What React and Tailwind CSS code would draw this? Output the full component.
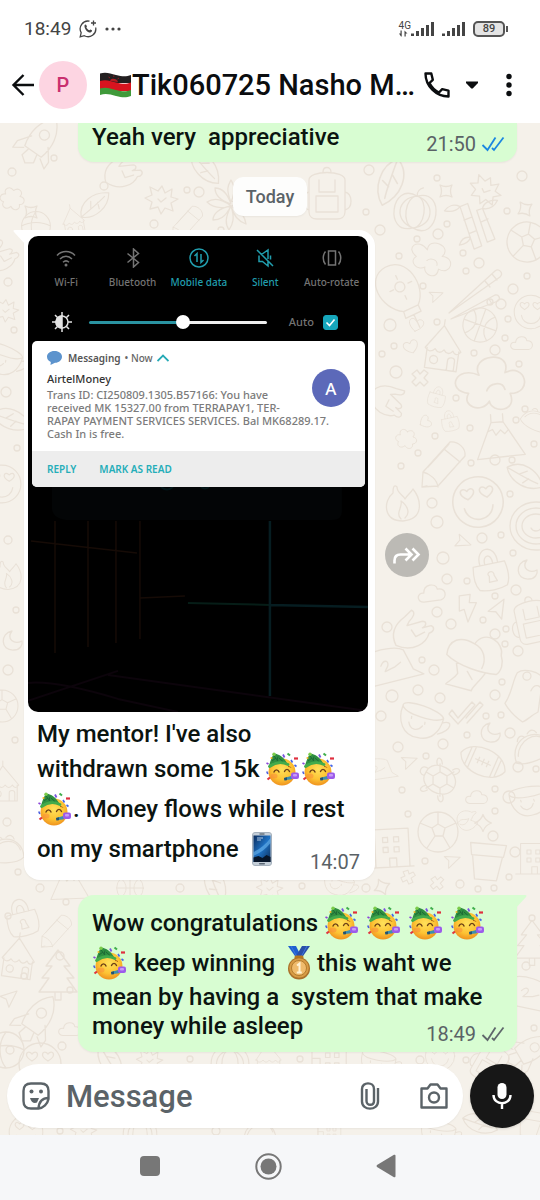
import { useState } from 'react';
import clsx from 'clsx';

const CIRCLES = [
  [12, 172, 4], [54, 158, 3], [104, 186, 4], [187, 190, 3], [199, 192, 5], [154, 224, 4], [221, 230, 3],
  [369, 170, 5], [437, 178, 3], [522, 176, 5], [366, 212, 3], [380, 230, 5], [438, 234, 5], [447, 224, 3],
  [507, 211, 3], [417, 239, 3], [479, 263, 5], [463, 253, 3], [466, 271, 3], [527, 276, 3], [513, 289, 5],
  [399, 256, 3], [423, 286, 3], [501, 304, 5], [490, 302, 3], [390, 325, 6], [437, 322, 3], [508, 319, 3],
  [505, 338, 3], [474, 353, 3], [495, 350, 5], [394, 346, 3], [382, 354, 3], [396, 372, 6], [519, 364, 3],
  [456, 398, 3], [525, 409, 3], [516, 420, 3], [470, 428, 3], [435, 436, 3], [418, 453, 3], [401, 466, 3],
  [495, 460, 5], [471, 463, 3], [512, 460, 3], [534, 444, 3], [432, 503, 5], [437, 522, 6], [510, 494, 3],
  [482, 538, 5], [501, 535, 3], [443, 558, 6], [447, 579, 5], [467, 581, 3], [513, 553, 3], [516, 590, 5],
  [437, 612, 5], [387, 627, 5], [451, 624, 5], [495, 596, 3], [483, 620, 3], [495, 634, 5], [506, 629, 3],
  [505, 644, 3], [518, 651, 5], [422, 660, 3], [434, 670, 5], [418, 690, 5], [392, 696, 6], [440, 698, 5],
  [495, 695, 5], [502, 682, 3], [381, 716, 5], [501, 715, 3], [486, 716, 3], [443, 744, 5], [467, 735, 3],
  [510, 733, 5], [398, 747, 5], [426, 756, 3], [518, 767, 5], [536, 769, 3], [402, 790, 3], [495, 789, 3],
  [509, 797, 6], [408, 814, 3], [495, 811, 3], [493, 836, 5], [515, 852, 5], [425, 861, 3], [509, 877, 3],
  [460, 884, 4], [478, 889, 3], [494, 888, 3], [8, 282, 4], [14, 330, 3], [6, 392, 5], [17, 448, 3],
  [8, 540, 4], [16, 610, 3], [8, 670, 5], [15, 740, 3], [7, 822, 4], [18, 872, 3], [40, 888, 4],
  [66, 902, 3], [8, 916, 3], [60, 956, 4], [24, 976, 3], [70, 990, 3], [10, 1050, 4], [62, 1046, 4],
  [180, 888, 4], [302, 886, 3], [366, 888, 4], [532, 918, 3], [526, 966, 4], [534, 1028, 3], [190, 1059, 3],
  [300, 1059, 3], [420, 1060, 4], [60, 1131, 3], [216, 1131, 4], [466, 1060, 3],
];

const DOODLES = [
  ['rocket', 41, 140, 1, 35], ['flower', 12, 200, 0.8, 10], ['star', 162, 199, 1, 0], ['leaf', 95, 205, 0.9, -30],
  ['hand', 128, 172, 1, 10], ['daisy', 231, 206, 1, 0], ['backpack', 327, 196, 1, 0], ['leaf', 205, 168, 1, 60],
  ['leaf', 390, 182, 1.2, 120], ['sparkle', 446, 191, 1, 0], ['star', 486, 190, 1, 20], ['pencil', 185, 221, 0.7, 0],
  ['ball', 36, 226, 0.8, 0], ['sparkle', 31, 212, 1, 0], ['house', 75, 222, 0.6, -10],
  ['pumpkin', 415, 212, 1, 8], ['bamboo', 473, 227, 1, -8], ['soccer', 527, 242, 1, 10], ['fluff', 432, 258, 0.8, 30],
  ['balloon', 398, 290, 1, -25], ['sticks', 477, 287, 1, 0], ['basket', 480, 325, 0.9, 20], ['house', 445, 350, 1, 8],
  ['heart', 416, 325, 0.7, 10], ['sparkle', 525, 209, 1, 10], ['arrow', 434, 297, 0.7, 20], ['cloud', 522, 344, 0.8, 0],
  ['heart', 411, 347, 0.7, -20], ['smile', 531, 312, 0.8, 0], ['cross', 420, 378, 1, 0], ['fluff', 492, 383, 1.3, 0],
  ['volcano', 500, 436, 1, -4], ['lock', 437, 397, 0.5, 15], ['lock', 450, 421, 0.5, -12], ['hand', 392, 405, 1, 60],
  ['heart', 425, 422, 0.6, 60], ['flower', 406, 440, 0.7, 10], ['pencil', 440, 463, 1, 0], ['fire', 403, 503, 1, 0],
  ['smile', 478, 502, 1.2, -8], ['rainbow', 536, 522, 1, 0], ['leaf', 525, 477, 1, 40], ['taco', 536, 420, 0.7, 30],
  ['arrow', 460, 542, 0.8, 60], ['lock', 490, 570, 1, -12], ['moon', 525, 569, 1, 0], ['cloud', 432, 594, 1, -8],
  ['bolt', 467, 608, 1, -8], ['arrow', 498, 612, 1, -20], ['hand', 418, 630, 1.1, 0], ['backpack', 533, 622, 0.9, -12],
  ['mushroom', 474, 655, 1.1, 15], ['cap', 393, 667, 1, -6], ['ghost', 525, 690, 1, 8], ['cup', 423, 722, 1, 8],
  ['checks', 470, 710, 1, 0], ['moon', 488, 732, 1, 0], ['football', 483, 762, 1, 24], ['arrow', 407, 763, 0.8, 20],
  ['turtle', 440, 780, 1, 30], ['taco', 532, 747, 1, -20], ['cloud', 477, 798, 0.8, 0], ['soccer', 438, 832, 1, 0],
  ['fire', 468, 820, 0.6, 70], ['sparkle', 483, 823, 1, 45], ['building', 393, 847, 1, -3], ['arrow', 450, 862, 0.8, 20],
  ['pot', 487, 862, 1, 5], ['cup', 532, 800, 0.9, -20], ['cross', 408, 877, 0.8, 20], ['cross', 437, 883, 0.8, 5],
  ['building', 535, 858, 0.8, 0], ['sparkle', 382, 887, 1, 20], ['cap', 380, 770, 0.6, 0],
  ['hand', 6, 256, 0.9, 0], ['star', 6, 310, 0.8, 0], ['cup', 4, 360, 0.9, 10], ['leaf', 12, 420, 1, 30],
  ['smile', 2, 484, 0.9, 0], ['fire', 8, 575, 0.8, 0], ['moon', 10, 640, 1, 0], ['soccer', 2, 706, 0.8, 0],
  ['house', 6, 785, 0.8, 0], ['taco', 6, 850, 0.9, 0], ['volcano', 70, 882, 0.8, 0], ['leaf', 215, 886, 1, 80],
  ['cup', 340, 884, 0.7, 10], ['star', 270, 888, 0.8, 0], ['basket', 130, 888, 0.7, 0],
  ['lock', 22, 918, 0.9, -14], ['pencil', 54, 930, 0.7, 0], ['house', 20, 960, 0.9, 8], ['tree', 58, 974, 1, 0],
  ['rocket', 38, 1018, 1, 35], ['arrow', 8, 1000, 0.9, 0], ['cloud', 70, 1030, 0.8, 0], ['ball', 6, 1050, 1, 0],
  ['smile', 40, 1064, 1, 0], ['leaf', 110, 1062, 1, 70], ['star', 150, 1060, 0.8, 0], ['pumpkin', 230, 1064, 0.9, 0],
  ['house', 270, 1060, 0.7, 0], ['building', 330, 1062, 0.9, 90], ['cup', 380, 1064, 0.8, 0], ['smile', 440, 1056, 0.7, 0],
  ['tree', 532, 942, 0.9, 0], ['cap', 531, 996, 0.9, 20], ['rocket', 530, 1050, 0.9, 60], ['backpack', 490, 1064, 0.8, 30],
  ['smile', 26, 1132, 0.8, 0], ['pumpkin', 140, 1134, 0.8, 0], ['star', 84, 1130, 0.8, 0], ['building', 330, 1134, 0.6, 90],
  ['taco', 260, 1132, 0.8, 0], ['cup', 440, 1134, 0.8, 0], ['leaf', 480, 1124, 0.9, 30], ['pot', 530, 1124, 0.7, 10],
];

const SHAPES = {
  rocket: 'M0-26c12 10 14 26 10 40h-20c-4-14-2-30 10-40zM-10 2l-9 12v8l9-6M10 2l9 12v8l-9-6M-5 14l-2 9 7 5 7-5-2-9M5-6a5 5 0 1 1-10 0 5 5 0 0 1 10 0z',
  flower: 'M0-12c6-6 13 0 9 6 8 0 8 9 1 10 3 7-6 10-10 4-4 6-13 3-10-4-7-1-7-10 1-10-4-6 3-12 9-6z',
  star: 'M0-13l3 7 7-4-1 8 7 2-7 4 2 8-8-3-4 6-3-7-8 2 2-7-7-4 7-3-2-8 8 4zM-4 0l3 3 5-4',
  leaf: 'M-20 4c6-16 26-18 40-8-8 14-28 18-40 8zM-20 4c12-2 24-4 34-7M-6 1l4-7M4-1l-2 7',
  hand: 'M-20 14c-6-12 0-20 8-26l6-6c4 2 2 6-2 10l-2 4 14-4c4 0 4 4 0 6l8-2c4 2 2 6-2 7-2 8-14 18-30 11zM-6 0l4 6 8-4',
  daisy: 'M0-4c-6-14-2-18 0-22 2 4 6 8 0 22M0-4c4-14 14-16 18-16-1 6-6 12-18 16M0 0c14-6 20-2 24 0-4 4-10 6-24 0M0 0c12 6 14 12 15 18-6-2-12-6-15-18M0 0c4 12 2 18-2 24-4-6-4-12 2-24M0 0c-6 12-12 14-18 14 0-6 6-12 18-14M0 0c-14 4-20 0-24-4 6-4 14-4 24 4M0-2c-12-4-16-10-16-16 6 0 12 4 16 16',
  backpack: 'M-18-16c0-10 36-10 36 0v32c0 5-4 7-8 7h-20c-4 0-8-2-8-7zM-11 0h22v16h-22zM-8-16v12h16v-12M-4-24c0-6 8-6 8 0M18-4c8 2 8 16 0 18M-18-4c-8 2-8 16 0 18',
  sparkle: 'M-6-6c4 2 8 2 12 0-2 4-2 8 0 12-4-2-8-2-12 0 2-4 2-8 0-12z',
  pencil: 'M-18 24l1-15 27-30c8-1 16 6 15 14l-27 30zM-17 9c8 2 14 8 15 15M4-14l16 13M-12 4l21-23M-18 24l5-1',
  ball: 'M18 0a18 18 0 1 1-36 0 18 18 0 0 1 36 0zM-18 0c10-6 26-6 36 0M0-18c-8 10-8 26 0 36',
  pumpkin: 'M0-16c28-12 28 44 0 32-28 12-28-44 0-32zM0-16c12 2 12 30 0 32-12-2-12-30 0-32zM0-16c-20 4-20 28 0 32M0-16c20 4 20 28 0 32M0-16c-1-5 2-8 5-9',
  bamboo: 'M-10-22l8-2 8 44-8 2zM-8-8l8-2M-5 6l8-2M6-16l6-1 8 32-8 2zM9-4l7-2M-10-22c-6-4-12-2-16 2 6 2 12 2 16-2M12-17c2-6 10-8 16-6-4 6-10 8-16 6M-4 10c-6-2-10 2-12 6 6 0 10-2 12-6',
  soccer: 'M20 0a20 20 0 1 1-40 0 20 20 0 0 1 40 0zM-6-4l6-4 7 4-2 8h-8zM0-8v-12M7-4l11-5M5 4l7 12M-3 4l-8 12M-6-4l-12-5',
  fluff: 'M-10-6c-8-16 26-20 20-2 16-8 22 16 4 16 6 14-14 16-16 6-6 10-22 4-16-6-18-2-10-22 8-14zM-4 6c2-6 12-8 14-1',
  balloon: 'M-4 22c-20-12-22-46 2-48s30 34 14 48zM-4 22l-1 7h17v-7M4 29v14M4-2m-6 0a5 5 0 1 0 10 0 5 5 0 0 0-10 0M4-14v4M4 8v4M-8-2h4M12-2h4',
  sticks: 'M-28 26l46-42c4-3 9 2 5 6zM-26 32l44-24c4-1 6 4 3 6zM8-6l5 6M12 12l3 5M15-13l5 6',
  basket: 'M19 0a19 19 0 1 1-38 0 19 19 0 0 1 38 0zM-19 0h38M0-19v38M-13-14c10 8 10 20 0 28M13-14c-10 8-10 20 0 28',
  house: 'M-18 0v20h32v-20M-20 0l16-24 20 24c-3 4-6 4-8 0-3 4-6 4-9 0-3 4-6 4-9 0-3 4-7 4-10 0zM4 20v-10c0-4 7-4 7 0v10M-6 11a4 4 0 1 1-8 0 4 4 0 0 1 8 0M-4-24v-6',
  heart: 'M0 9c-16-10-10-20-3-17l3 3 3-3c8-3 13 8-3 17z',
  cloud: 'M-9 7c-8-1-6-11 1-9 1-9 13-9 14-2 9-1 9 10 2 11z',
  arrow: 'M-9-4l19-6-9 18-3-9z',
  smile: 'M21 0a21 21 0 1 1-42 0 21 21 0 0 1 42 0zM-12 4c2 14 22 14 24 0M-8-3c-10-6-4-12 0-7 4-5 10 1 0 7M8-3c-10-6-4-12 0-7 4-5 10 1 0 7',
  cross: 'M-3-8l3 4 4-4 4 3-4 5 4 4-4 4-4-4-4 4-4-4 4-4-4-4z',
  volcano: 'M-24 22l16-36h12l20 34zM-12-5l5-2 3 6 5-5 4 4 4-4M-8-14v-8M4-14v-8',
  lock: 'M-16-6h32c2 10 2 18-2 24-8 3-20 3-28 0-4-6-4-14-2-24zM-9-6c-2-20 20-20 18 0M-4-6c-1-11 9-11 8 0M0 12l-3 0 1-6c-4-4 6-7 5 0l2 6z',
  fire: 'M0 18c-20 0-20-20-10-28 0-8 2-8 4-6 0 6 6 8 8 12 2-4 6-6 8-10 8 10 12 30-10 32zM-2 16c-6-6 2-12 0-18 6 4 10 12 4 17',
  rainbow: 'M26 4a26 24 0 1 1-52 0 26 24 0 0 1 52 0zM20 4a20 18 0 1 1-40 0 20 18 0 0 1 40 0zM14 4a14 12 0 1 1-28 0 14 12 0 0 1 28 0zM-5 6c2 4 8 4 10 0',
  taco: 'M-20 10c0-28 38-30 40-2-8 8-32 8-40 2zM-16 4c4-14 26-20 32-4M-12-10c2-5 6-5 8-2M0-14c4-4 8-2 9 2',
  moon: 'M2-9c-12 2-12 20 2 19 6 0 9-5 8-9-8 4-16-2-10-10z',
  bolt: 'M-6-13h11l-2 8 7 1-11 18-2-13-5 1z',
  mushroom: 'M-24 6c-2-14 8-20 22-16 6-16 26-8 26 4 4 6 4 14 0 18-12 2-34 2-48-6zM-2-10c10 2 14 12 12 20M-14 10l4 10c-2 6-6 8-8 12h24c0-4 4-8 8-18M-2 16l6 6',
  cap: 'M-26 18l2-32c10-6 30-6 36-2l8 20 10 6zM-12-2c4-8 10-4 6 2s-4 4 8 0l6-4',
  ghost: 'M-18 16c6-12 4-22 8-32 6-6 22-4 26 2v34c-6 4-10 10-14 12-8-4-14-8-20-16zM-4-14a4 4 0 1 0 8 0 4 4 0 0 0-8 0M6 0c2-8 10-8 10 0',
  cup: 'M-22-14c0-8 40 0 42 8-2 14-10 24-24 22-14 0-22-14-18-30zM-22-14c2 8 34 14 42 8M20-2c10-4 10 6-4 12M-14 2c2 8 10 8 14 2M-12-4v2M2 0v2',
  checks: 'M-18 0l6 8 14-16 3 3-17 19-9-10zM-4 8l14-16 3 3-16 18',
  football: 'M-24 0c6-18 42-18 48 0-6 18-42 18-48 0zM-16-9v18M-12-11v22M12-11v22M16-9v18M-8 0h16M-5-3v6M0-3v6M5-3v6',
  turtle: 'M-16 0c-2-18 32-18 32 0s-34 18-32 0zM-8 0l4-7h8l4 7-4 7h-8zM-8 0h-8M-4-7l-4-7M4-7l4-7M8 0h8M4 7l4 7M-4 7l-4 7M-16-4c-8-2-8 10 0 8M-10-12c-6-6 0-10 4-3M10-12c6-6 0-10-4-3M-10 12c-6 6 0 10 4 3M10 12c6 6 0 10-4 3',
  building: 'M-18-18h34v38h-34zM-24 20h44M-10-10h5v5h-5zM1-10h5v5h-5zM-10 0h5v5h-5zM1 0h5v5h-5zM-4 20v-9h7v9',
  pot: 'M-18-18h36l-2 12h-32zM-15-6l4 24h22l4-24',
  tree: 'M0-24l12 16h-6l10 12h-7l10 14h-38l10-14h-7l10-12h-6zM-3 18v8h6v-8',
};

function Wallpaper() {
  return (
    <svg
      className="absolute inset-0 h-full w-full"
      viewBox="0 123 540 1012"
      preserveAspectRatio="xMinYMin slice"
      fill="none"
      stroke="#e9e1d7"
      strokeWidth="1.3"
      strokeLinecap="round"
      strokeLinejoin="round"
      aria-hidden="true"
    >
      {CIRCLES.map(([x, y, r]) => (
        <circle key={`${x}-${y}`} cx={x} cy={y} r={r} />
      ))}
      {DOODLES.map(([name, x, y, s, rot]) => (
        <path key={`${name}-${x}-${y}`} d={SHAPES[name]} transform={`translate(${x} ${y}) rotate(${rot}) scale(${s})`} />
      ))}
    </svg>
  );
}

function EmojiBox({ label, children }) {
  return (
    <span role="img" aria-label={label} className="inline-flex h-10 w-9 items-center justify-center align-[-9px]">
      {children}
    </span>
  );
}

function PartyFace() {
  return (
    <EmojiBox label="partying face">
      <svg width="34" height="34" viewBox="0 0 34 34">
        <defs>
          <radialGradient id="partySkin" cx="0.5" cy="0.4" r="0.62">
            <stop offset="0" stopColor="#ffe15a" />
            <stop offset="0.6" stopColor="#fdc334" />
            <stop offset="1" stopColor="#ee8f1c" />
          </radialGradient>
        </defs>
        <circle cx="16" cy="20" r="13.500" fill="url(#partySkin)" />
        <ellipse cx="8" cy="24" rx="3.500" ry="2.500" fill="#f9863b" opacity="0.5" />
        <path d="M3 13.500C4.500 8.500 6 4.500 8 1.500c5 .5 10.500 4 13.500 10.500C15.500 9 9 10 3 13.500z" fill="#2f8f41" />
        <path d="M6 9l4-3M8 4l4 5M12 4.500l-1 4M13 6l4 3.500" stroke="#1d6a35" strokeWidth="1" />
        <path d="M3.500 14.500c5.500-4 12-5 18.500-2" stroke="#43ab4b" strokeWidth="2.800" fill="none" strokeLinecap="round" />
        <circle cx="8" cy="2.200" r="1.700" fill="#7ccc4a" />
        <circle cx="5.500" cy="6" r="1.100" fill="#f5b92e" />
        <path d="M8 20c1-2.800 4-2.800 5 0M18.500 19.500c1-2.800 4-2.800 5 0" fill="none" stroke="#6b3f16" strokeWidth="1.400" strokeLinecap="round" />
        <path d="M22 14.500c1.500 0 2.500.500 3 1.200" fill="none" stroke="#a8661a" strokeWidth="1" />
        <path d="M18 26l8-2.200v3.500l-7.500 1z" fill="#3b8fb0" />
        <path d="M18 26l3-.800v3l-2.500.300z" fill="#24526f" />
        <rect x="25" y="20.500" width="8" height="6.500" rx="2" fill="#9c5bea" />
        <rect x="27" y="22" width="4" height="2.500" rx="1" fill="#c79bf7" />
        <path d="M21.500 1.500l2.500 2" stroke="#3fae4c" strokeWidth="2" />
        <path d="M28 6.500h4" stroke="#df2f3f" strokeWidth="2.200" />
        <path d="M17 2.500l1.500 3" stroke="#7a55e0" strokeWidth="1.800" />
        <path d="M25 8l1.500 2.500M28.500 13l2 1.500" stroke="#4565e8" strokeWidth="1.600" />
        <path d="M.500 11l2 1" stroke="#8a45d8" strokeWidth="1.800" />
        <path d="M.800 19.500l1 2.500" stroke="#4b5fe0" strokeWidth="1.600" />
        <path d="M1.500 27.500l2.500-2" stroke="#e0373f" strokeWidth="2.200" />
      </svg>
    </EmojiBox>
  );
}

function PhoneEmoji() {
  return (
    <EmojiBox label="mobile phone">
      <svg width="20" height="34" viewBox="0 0 20 34">
        <defs>
          <linearGradient id="phoneScreen" x1="0" y1="0" x2="1" y2="1">
            <stop offset="0" stopColor="#0c2c5c" />
            <stop offset="0.5" stopColor="#1f72c4" />
            <stop offset="1" stopColor="#0b2a55" />
          </linearGradient>
        </defs>
        <rect x="0.500" y="0.500" width="19" height="33" rx="2.500" fill="#c4ced8" stroke="#a5b0bc" />
        <rect x="1.500" y="3.500" width="17" height="26.500" fill="url(#phoneScreen)" />
        <path d="M1.500 20C8 17 14 12 18.500 6v5C14 17 8 21 1.500 24z" fill="#6cb8f0" opacity="0.600" />
        <path d="M1.500 25.500l5-1.500 4 2 4-3 4 2v5h-17z" fill="#071529" />
        <path d="M5 6h6M5 8h4" stroke="#dbe9f8" strokeWidth="0.800" />
        <path d="M7.500 2h5" stroke="#3d4853" />
        <rect x="7" y="31" width="6" height="1.500" rx="0.700" fill="#5a6673" />
      </svg>
    </EmojiBox>
  );
}

function MedalEmoji() {
  return (
    <EmojiBox label="first place medal">
      <svg width="24" height="34" viewBox="0 0 24 34">
        <path d="M1 0h8l5 10-4 3z" fill="#1f5fd0" />
        <path d="M23 0h-8l-6 10 5 3z" fill="#2a4fa8" />
        <path d="M4 0l6 11M20 0l-6 11" stroke="#3f78dd" strokeWidth="1" />
        <rect x="7.500" y="9.500" width="9" height="4" rx="1.500" fill="#b8791d" />
        <circle cx="12" cy="22.500" r="11" fill="#a9702a" />
        <circle cx="12" cy="22" r="9.800" fill="#d89c45" />
        <circle cx="12" cy="22" r="7.500" fill="#efbb6c" stroke="#b27c30" strokeWidth="1" />
        <path d="M10 19.500l2.500-2v9M9.800 26.500h5" fill="none" stroke="#fff3d6" strokeWidth="2" />
      </svg>
    </EmojiBox>
  );
}

function MalawiFlag() {
  return (
    <span role="img" aria-label="flag of Malawi" className="inline-flex">
      <svg width="33" height="26" viewBox="0 0 33 26">
        <path d="M1 1.500c6-2 10 0 16 1.500s10 2 15 0V11H1z" fill="#231f20" />
        <path d="M1 9c6-2 10 0 16 1.500s10 2 15 0V19H1z" fill="#d8141f" />
        <path d="M1 16.500c6-2 10 0 16 1.500s10 2 15 0v6c-5 2-9 1.500-15 0s-10-3-16-1z" fill="#3f9a3a" />
        <path d="M11 8.800c1-3 7-2.500 8 1.300-3-.3-5.500-.8-8-1.300z" fill="#b51c22" />
        <path d="M14.800 5V3.500M11 6L9.500 5M18.500 7l1.500-1" stroke="#8e1a1f" strokeWidth="1" />
      </svg>
    </span>
  );
}

function DoubleCheck({ className }) {
  return (
    <svg className={className} width="24" height="16" viewBox="0 0 24 16" fill="none" stroke="currentColor" strokeWidth="1.800" aria-hidden="true">
      <path d="M1.500 9l5 5 8-12.500M11 12l2 2 9.500-12.500" />
    </svg>
  );
}

function Stamp({ time, tick, className }) {
  return (
    <span className={clsx('absolute bottom-[6px] flex items-center gap-[5px] text-[20px] leading-6 font-normal text-[#5a6266]', className)}>
      {time}
      {tick && <DoubleCheck className={tick} />}
    </span>
  );
}

function SignalBars() {
  return (
    <svg width="24" height="16" viewBox="0 0 24 16" fill="#444" aria-hidden="true">
      <path d="M0 12.500h3V15H0zM5 10h3v5H5zM10 7h3v8h-3zM15 4h3v11h-3zM20 1h3v14h-3z" />
    </svg>
  );
}

function StatusBar() {
  return (
    <div className="flex items-center justify-between pt-4 pr-8 pl-6 text-[#444]">
      <div className="flex items-center gap-2">
        <time className="text-[19px] leading-[26px]">18:49</time>
        <svg width="18" height="18" viewBox="0 0 18 18" fill="none" stroke="#444" strokeWidth="1.300" aria-hidden="true">
          <path d="M10.500 1.200A7.800 7.800 0 0 0 2.200 12.700L1.200 16.800l4.100-1.100A7.800 7.800 0 0 0 16.700 7.500" />
          <path d="M14.500.500v5M12 3h5" />
          <path d="M5.500 5.200c.5-1 1.500-1 1.900 0l.5 1.200c.1.500-.6 1-.6 1.200.6 1.200 1.600 2.200 2.900 2.700.4 0 .8-1 1.200-.8l1.500.8c.6.600-.4 2-1.400 2.200C8.500 12.700 5 8.800 5.500 5.200z" fill="#444" stroke="none" />
        </svg>
        <svg width="16" height="4" viewBox="0 0 16 4" fill="#444" aria-hidden="true">
          <circle cx="2" cy="2" r="1.600" />
          <circle cx="8" cy="2" r="1.600" />
          <circle cx="14" cy="2" r="1.600" />
        </svg>
      </div>
      <div className="flex items-center">
        <div className="flex flex-col items-start">
          <span className="text-[10px] leading-[9px]">4G</span>
          <svg width="9" height="7" viewBox="0 0 9 7" fill="#444" aria-hidden="true">
            <path d="M2 6.500L0 3.500h1.500V.500h1.200v6zM5.500.500l3 3H6.700v3H5.500z" />
          </svg>
        </div>
        <SignalBars />
        <span className="w-[7px]" />
        <SignalBars />
        <span className="ml-[7px] flex h-4 w-8 items-center justify-center rounded-[5px] border-2 border-[#555] bg-[#e4e4e4] text-[11px] leading-3 font-medium">
          89
        </span>
        <span className="ml-px h-[6px] w-[2px] bg-[#555]" />
      </div>
    </div>
  );
}

function ChatHeader() {
  return (
    <header className="flex items-center pt-[19px] pr-[22px] pb-[14px] pl-[11px] text-[#0b0d0f]">
      <button type="button" aria-label="Back" className="mr-1">
        <svg width="24" height="24" viewBox="0 0 24 24" fill="none" stroke="currentColor" strokeWidth="2.400">
          <path d="M23 12H2.500M12.500 2L2.500 12l10 10" />
        </svg>
      </button>
      <span className="flex size-12 shrink-0 items-center justify-center rounded-full bg-[#fdd5e2] text-[20px] font-medium text-[#c9306f]">P</span>
      <h1 className="ml-3 flex min-w-0 items-center text-[29px] leading-9 font-medium whitespace-nowrap">
        <MalawiFlag />
        Tik060725 Nasho M…
      </h1>
      <div className="ml-auto flex shrink-0 items-center">
        <button type="button" aria-label="Call" className="flex items-center gap-4">
          <svg width="26" height="26" viewBox="0 0 26 26" fill="none" stroke="currentColor" strokeWidth="2.400" strokeLinejoin="round">
            <path d="M1.500 1.500h5.800l1.500 6.300-3.300 3.200c2 4.200 5.200 7.400 9.500 9.500l3.200-3.300 6.300 1.500v5.800C12 24.500 1.500 14 1.500 1.500z" />
          </svg>
          <svg width="12" height="8" viewBox="0 0 12 8" fill="currentColor">
            <path d="M0 .500h12v1.500L6.700 7.500H5.300L0 2z" />
          </svg>
        </button>
        <button type="button" aria-label="More options" className="ml-[22px]">
          <svg width="18" height="24" viewBox="0 0 18 24" fill="currentColor">
            <circle cx="9" cy="3.500" r="2.700" />
            <circle cx="9" cy="12" r="2.700" />
            <circle cx="9" cy="20.500" r="2.700" />
          </svg>
        </button>
      </div>
    </header>
  );
}

const TILES = [
  {
    label: 'Wi-Fi',
    icon: (
      <>
        <path d="M1 7.500c5-5.300 13-5.300 18 0M4 11c3.500-3.700 8.500-3.700 12 0M7 14.300c1.800-1.700 4.200-1.700 6 0" />
        <circle cx="10" cy="17" r="1.500" fill="currentColor" stroke="none" />
      </>
    ),
  },
  { label: 'Bluetooth', icon: <path d="M4.500 5.500l11 9-5 4.500V1l5 4.500-11 9" /> },
  {
    label: 'Mobile data',
    active: true,
    icon: (
      <>
        <circle cx="10" cy="10" r="9" />
        <path d="M5.500 8l2.500-2.500V14M14.500 12L12 14.500V6" />
      </>
    ),
  },
  {
    label: 'Silent',
    active: true,
    icon: <path d="M2 2l16 16M4 7.500v6h3.500L13 18v-5M6.500 6.500L13 2v9M15.500 7.500v4" />,
  },
  {
    label: 'Auto-rotate',
    icon: <path d="M6.500 3h7v14h-7zM3.500 3.500C.500 7 .500 13 3.500 16.500M16.500 3.500c3 3.500 3 9.500 0 13" />,
  },
];

function QuickSettings() {
  const [brightness, setBrightness] = useState(53);
  const [auto, setAuto] = useState(true);

  return (
    <div className="pt-3 pr-[3px] pb-[9px] pl-[5px]">
      <div className="grid grid-cols-5">
        {TILES.map((tile) => (
          <button
            key={tile.label}
            type="button"
            className={clsx(
              'flex flex-col items-center gap-[6px] text-[10px] leading-4 font-medium whitespace-nowrap',
              tile.active ? 'text-[#219eae]' : 'text-[#747474]'
            )}
          >
            <svg width="20" height="20" viewBox="0 0 20 20" fill="none" stroke="currentColor" strokeWidth="1.500" aria-hidden="true">
              {tile.icon}
            </svg>
            {tile.label}
          </button>
        ))}
      </div>
      <div className="mt-[22px] flex items-center pr-[27px] pl-[19px]">
        <svg width="20" height="20" viewBox="0 0 20 20" fill="none" stroke="#e2e2e2" strokeWidth="1.500" aria-hidden="true">
          <circle cx="10" cy="10" r="6" />
          <path d="M10 4a6 6 0 0 0 0 12z" fill="#e2e2e2" />
          <path d="M10 0v4M10 16v4M0 10h4M16 10h4M3 3l2.500 2.500M14.500 14.500L17 17M3 17l2.500-2.500M14.500 5.500L17 3" />
        </svg>
        <input
          type="range"
          aria-label="Brightness"
          value={brightness}
          onChange={(e) => setBrightness(Number(e.target.value))}
          style={{ backgroundImage: `linear-gradient(to right, #2a93a1 ${brightness}%, #efefef ${brightness}%)` }}
          className="ml-[17px] h-[3px] min-w-0 flex-1 appearance-none rounded-full [&::-webkit-slider-thumb]:size-[14px] [&::-webkit-slider-thumb]:appearance-none [&::-webkit-slider-thumb]:rounded-full [&::-webkit-slider-thumb]:bg-white"
        />
        <label className="ml-[22px] flex items-center gap-[9px] text-[11px] leading-4 text-[#747474]">
          Auto
          <span className="relative flex size-[15px]">
            <input
              type="checkbox"
              checked={auto}
              onChange={(e) => setAuto(e.target.checked)}
              className="peer size-[15px] appearance-none rounded-[3px] border border-[#16a6bb] checked:bg-[#16a6bb]"
            />
            <svg className="pointer-events-none absolute inset-0 hidden peer-checked:block" viewBox="0 0 15 15" fill="none" stroke="#fff" strokeWidth="1.600" aria-hidden="true">
              <path d="M3.500 7.500l3 3 5-6" />
            </svg>
          </span>
        </label>
      </div>
    </div>
  );
}

function SmsNotification() {
  return (
    <section className="mr-[3px] ml-1 overflow-hidden rounded-[5px] bg-white text-[#7b7b7b]">
      <div className="relative px-[15px] pt-[9px] pb-[11px]">
        <div className="flex items-center text-[10px] leading-4">
          <svg className="mr-[6px]" width="15" height="14" viewBox="0 0 15 14" fill="#5c93cd" aria-hidden="true">
            <path d="M7.500 0C12 0 15 2.500 15 5.800s-3 6-7 6L3.500 14l.3-3C1.500 10 0 8.200 0 5.800 0 2.500 3 0 7.500 0z" />
          </svg>
          <span className="font-semibold text-[#555]">Messaging</span>
          <span className="ml-1 font-medium text-[#666]">•&nbsp;Now</span>
          <svg className="ml-1" width="12" height="8" viewBox="0 0 12 8" fill="none" stroke="#27aab6" strokeWidth="1.800" aria-hidden="true">
            <path d="M.500 7L6 1.500 11.500 7" />
          </svg>
        </div>
        <h2 className="mt-[5px] text-[11px] leading-4 font-medium text-[#333]">AirtelMoney</h2>
        <p className="mt-px text-[11px] leading-[13px] whitespace-nowrap">
          Trans ID: CI250809.1305.B57166: You have
          <br />
          received MK 15327.00 from TERRAPAY1, TER-
          <br />
          RAPAY PAYMENT SERVICES SERVICES. Bal MK68289.17.
          <br />
          Cash In is free.
        </p>
        <span className="absolute top-7 right-[15px] flex size-[38px] items-center justify-center rounded-full bg-[#5c69b9] text-[17px] text-white">A</span>
      </div>
      <div className="flex gap-[23px] bg-[#ededed] px-[15px] py-[10px] text-[10px] leading-4 font-semibold text-[#25adb9]">
        <button type="button">REPLY</button>
        <button type="button">MARK AS READ</button>
      </div>
    </section>
  );
}

function PhoneScreenshot() {
  return (
    <div className="overflow-hidden rounded-[10px] bg-black font-['Noto_Sans',sans-serif]">
      <QuickSettings />
      <SmsNotification />
      <svg className="block w-full" viewBox="0 0 340 225" fill="none" aria-hidden="true">
        <path d="M24 0h290v25q0 8-10 8H38q-14-2-14-12z" fill="#030506" />
        <path d="M133 0q6 5 12 0M173 0q4 3 8 0" stroke="#041618" strokeWidth="2" />
        <path d="M3 54l106 12M27 34v132M60 34v126M88 34v122M112 34v118M112 111l45-2" stroke="#160b06" strokeWidth="1.500" />
        <path d="M160 116l82 2" stroke="#061d17" strokeWidth="2" />
        <path d="M242 34v175M242 118l98 2" stroke="#061d21" strokeWidth="2.500" />
        <path d="M0 196c20-2 50 4 90 16l60 13M80 188l260 36M0 214l90-30" stroke="#0c040b" strokeWidth="2" />
      </svg>
    </div>
  );
}

function Composer() {
  const [text, setText] = useState('');

  return (
    <form className="relative mt-3 flex items-center gap-[7px] pr-[6px] pb-[7px] pl-[7px]" onSubmit={(e) => e.preventDefault()}>
      <div className="flex h-16 min-w-0 flex-1 items-center rounded-full bg-white px-[15px] text-[#5b6368] shadow-xs">
        <button type="button" aria-label="Stickers">
          <svg width="28" height="28" viewBox="0 0 28 28" fill="none" stroke="currentColor" strokeWidth="2.400" strokeLinejoin="round">
            <path d="M9 1.500h10c5 0 7.500 2.500 7.500 7.500v8c-1 5-5 9-10 9.500H9c-5 0-7.500-2.500-7.500-7.500V9c0-5 2.500-7.500 7.500-7.500z" />
            <path d="M26.500 16c-6 0-9.500 3.500-10 10.500" />
            <path d="M8 16h9l-2 4.500c-3 1.500-6-.5-7-4.500z" fill="currentColor" stroke="none" />
            <circle cx="9.500" cy="9.500" r="2" fill="currentColor" stroke="none" />
            <circle cx="19" cy="9.500" r="2" fill="currentColor" stroke="none" />
          </svg>
        </button>
        <input
          type="text"
          aria-label="Message"
          placeholder="Message"
          value={text}
          onChange={(e) => setText(e.target.value)}
          className="ml-4 min-w-0 flex-1 bg-transparent pt-[3px] text-[31px] leading-10 font-medium outline-none placeholder:text-[#5b6368]"
        />
        <button type="button" aria-label="Attach">
          <svg width="20" height="28" viewBox="0 0 20 28" fill="none" stroke="currentColor" strokeWidth="2.400">
            <path d="M18 6v13.500c0 9.500-16 9.500-16 0V7c0-7.500 12-7.500 12 0v12c0 5-7.500 5-7.500 0V7" />
          </svg>
        </button>
        <button type="button" aria-label="Camera" className="ml-10">
          <svg width="28" height="26" viewBox="0 0 28 26" fill="none" stroke="currentColor" strokeWidth="2.400" strokeLinejoin="round">
            <path d="M1.500 5.500h6l3-4h7l3 4h6v19h-25z" />
            <circle cx="14" cy="14.500" r="5" />
          </svg>
        </button>
      </div>
      <button type="button" aria-label="Record voice message" className="flex size-16 shrink-0 items-center justify-center rounded-full bg-[#171717] text-white shadow-sm">
        <svg width="20" height="28" viewBox="0 0 20 28" fill="none" stroke="currentColor" strokeWidth="2.400">
          <rect x="5.500" y="1" width="9" height="16" rx="4.500" fill="currentColor" stroke="none" />
          <path d="M1.500 13c0 11 17 11 17 0M10 21v6" />
        </svg>
      </button>
    </form>
  );
}

function SystemNav() {
  return (
    <nav className="flex h-[65px] items-center justify-center gap-[91px] bg-[#f6f7f9] pr-1 pb-[3px] text-[#777]">
      <button type="button" aria-label="Recent apps" className="flex w-[27px] justify-center">
        <span className="size-5 rounded-[4px] bg-[#777]" />
      </button>
      <button type="button" aria-label="Home" className="flex w-[27px] justify-center">
        <svg width="27" height="27" viewBox="0 0 27 27" fill="none" stroke="currentColor" strokeWidth="2">
          <circle cx="13.500" cy="13.500" r="12.200" />
          <circle cx="13.500" cy="13.500" r="8" fill="currentColor" stroke="none" />
        </svg>
      </button>
      <button type="button" aria-label="Back to previous screen" className="flex w-[27px] justify-center">
        <svg width="20" height="24" viewBox="0 0 20 24" fill="currentColor">
          <path d="M18 .800q1.500-.500 1.500 1v20.400q0 1.500-1.500 1L1 13q-1-1 0-2z" />
        </svg>
      </button>
    </nav>
  );
}

export default function App() {
  return (
    <div className="flex min-h-screen flex-col bg-white font-[Roboto,sans-serif]">
      <StatusBar />
      <ChatHeader />
      <main className="relative flex flex-1 flex-col overflow-hidden bg-[#f5f1ea] text-[24px] leading-[29px] font-medium text-[#0b1410]">
        <Wallpaper />

        <div className="relative mr-[23px] ml-[78px] rounded-b-2xl bg-[#d8fdd2] px-[14px] pb-[10px] whitespace-pre shadow-xs">
          Yeah very  appreciative
          <Stamp time="21:50" tick="text-[#1c87e0]" className="right-3" />
        </div>

        <p className="relative mt-[15px] self-center rounded-[10px] bg-[#fdfdfc] px-[13px] py-[5px] text-[18px] text-[#5b6368] shadow-xs">Today</p>

        <div className="relative mt-[14px] ml-6 flex items-center gap-[10px]">
          <article className="relative w-[68%] rounded-2xl rounded-tl-none bg-white pt-[6px] pr-[7px] pb-[11px] pl-1 shadow-xs">
            <svg className="absolute top-0 -left-[11px]" width="12" height="14" viewBox="0 0 12 14" fill="#fff" aria-hidden="true">
              <path d="M12 0H2Q-.500 0 1 2l11 12z" />
            </svg>
            <PhoneScreenshot />
            <p className="mt-2 pl-[9px] whitespace-nowrap">
              My mentor! I've also
              <br />
              withdrawn some 15k <PartyFace />
              <PartyFace />
              <br />
              <PartyFace />. Money flows while I rest
              <br />
              on my smartphone <PhoneEmoji />
            </p>
            <Stamp time="14:07" className="right-[15px]" />
          </article>
          <button type="button" aria-label="Forward" className="flex size-11 items-center justify-center rounded-full bg-[#bcbab5] text-white">
            <svg width="28" height="20" viewBox="0 0 28 20" fill="none" stroke="currentColor" strokeWidth="2.600">
              <path d="M1.500 18.500v-3c0-4 2.500-6 6-6h11M12.500 3.500l6 6-6 6M19.500 3.500l6 6-6 6" />
            </svg>
          </button>
        </div>

        <div className="relative mt-[15px] mr-[23px] ml-[78px] rounded-2xl rounded-tr-none bg-[#d8fdd2] px-[14px] pt-2 pb-[11px] whitespace-nowrap shadow-xs">
          <svg className="absolute top-0 -right-[10px]" width="12" height="14" viewBox="0 0 12 14" fill="#d8fdd2" aria-hidden="true">
            <path d="M0 0h10q2.500 0 1 2L0 14z" />
          </svg>
          <p>
            Wow congratulations <PartyFace /> <PartyFace /> <PartyFace /> <PartyFace />
            <br />
            <PartyFace /> keep winning <MedalEmoji />
            this waht we
            <br />
            mean by having a&nbsp; system that make
            <br />
            money while asleep
          </p>
          <Stamp time="18:49" tick="text-[#5f676b]" className="right-3" />
        </div>

        <Composer />
      </main>
      <SystemNav />
    </div>
  );
}
